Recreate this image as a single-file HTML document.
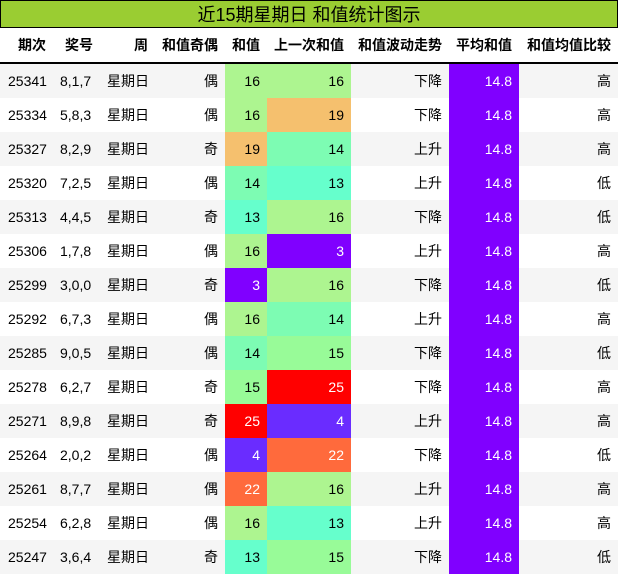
<!DOCTYPE html><html><head><meta charset="utf-8"><style>
body{margin:0;width:618px;height:575px;background:#fff;font-family:"Liberation Sans","Noto Sans CJK SC",sans-serif;overflow:hidden}
.t{position:absolute;left:0;top:0;width:616px;height:26px;background:#9acd32;border:1px solid #000;text-align:center;font-size:18px;line-height:28px;color:#000}
table{position:absolute;left:0;top:28px;border-collapse:collapse;table-layout:fixed;width:618px;font-size:14px}
th{height:34px;font-weight:bold;text-align:right;padding:0 7px;border-bottom:2px solid #000;white-space:nowrap}
td{height:34px;padding:0 7px;text-align:right;white-space:nowrap}
tr:nth-child(even) td{background:#f5f5f5}
td:nth-child(1){padding-left:8px}
td:nth-child(1),td:nth-child(2),td:nth-child(3){text-align:left}
td:nth-child(8){background:#8000ff!important;color:#fff}
.a{background:#adf590!important}.b{background:#f5c06e!important}.c{background:#7dfcb3!important}.d{background:#66ffcc!important}.e{background:#98fb98!important}
.f{background:#8000ff!important;color:#fff}.g{background:#ff0000!important;color:#fff}.h{background:#6a2cff!important;color:#fff}.i{background:#ff6a3c!important;color:#fff}
</style></head><body>
<div class="t">近15期星期日 和值统计图示</div>
<table>
<colgroup><col style="width:53px"><col style="width:47px"><col style="width:55px"><col style="width:70px"><col style="width:42px"><col style="width:84px"><col style="width:98px"><col style="width:70px"><col style="width:99px"></colgroup>
<tr><th>期次</th><th>奖号</th><th>周</th><th>和值奇偶</th><th>和值</th><th>上一次和值</th><th>和值波动走势</th><th>平均和值</th><th>和值均值比较</th></tr>
<tr><td>25341</td><td>8,1,7</td><td>星期日</td><td>偶</td><td class="a">16</td><td class="a">16</td><td>下降</td><td>14.8</td><td>高</td></tr>
<tr><td>25334</td><td>5,8,3</td><td>星期日</td><td>偶</td><td class="a">16</td><td class="b">19</td><td>下降</td><td>14.8</td><td>高</td></tr>
<tr><td>25327</td><td>8,2,9</td><td>星期日</td><td>奇</td><td class="b">19</td><td class="c">14</td><td>上升</td><td>14.8</td><td>高</td></tr>
<tr><td>25320</td><td>7,2,5</td><td>星期日</td><td>偶</td><td class="c">14</td><td class="d">13</td><td>上升</td><td>14.8</td><td>低</td></tr>
<tr><td>25313</td><td>4,4,5</td><td>星期日</td><td>奇</td><td class="d">13</td><td class="a">16</td><td>下降</td><td>14.8</td><td>低</td></tr>
<tr><td>25306</td><td>1,7,8</td><td>星期日</td><td>偶</td><td class="a">16</td><td class="f">3</td><td>上升</td><td>14.8</td><td>高</td></tr>
<tr><td>25299</td><td>3,0,0</td><td>星期日</td><td>奇</td><td class="f">3</td><td class="a">16</td><td>下降</td><td>14.8</td><td>低</td></tr>
<tr><td>25292</td><td>6,7,3</td><td>星期日</td><td>偶</td><td class="a">16</td><td class="c">14</td><td>上升</td><td>14.8</td><td>高</td></tr>
<tr><td>25285</td><td>9,0,5</td><td>星期日</td><td>偶</td><td class="c">14</td><td class="e">15</td><td>下降</td><td>14.8</td><td>低</td></tr>
<tr><td>25278</td><td>6,2,7</td><td>星期日</td><td>奇</td><td class="e">15</td><td class="g">25</td><td>下降</td><td>14.8</td><td>高</td></tr>
<tr><td>25271</td><td>8,9,8</td><td>星期日</td><td>奇</td><td class="g">25</td><td class="h">4</td><td>上升</td><td>14.8</td><td>高</td></tr>
<tr><td>25264</td><td>2,0,2</td><td>星期日</td><td>偶</td><td class="h">4</td><td class="i">22</td><td>下降</td><td>14.8</td><td>低</td></tr>
<tr><td>25261</td><td>8,7,7</td><td>星期日</td><td>偶</td><td class="i">22</td><td class="a">16</td><td>上升</td><td>14.8</td><td>高</td></tr>
<tr><td>25254</td><td>6,2,8</td><td>星期日</td><td>偶</td><td class="a">16</td><td class="d">13</td><td>上升</td><td>14.8</td><td>高</td></tr>
<tr><td>25247</td><td>3,6,4</td><td>星期日</td><td>奇</td><td class="d">13</td><td class="e">15</td><td>下降</td><td>14.8</td><td>低</td></tr>
</table></body></html>
